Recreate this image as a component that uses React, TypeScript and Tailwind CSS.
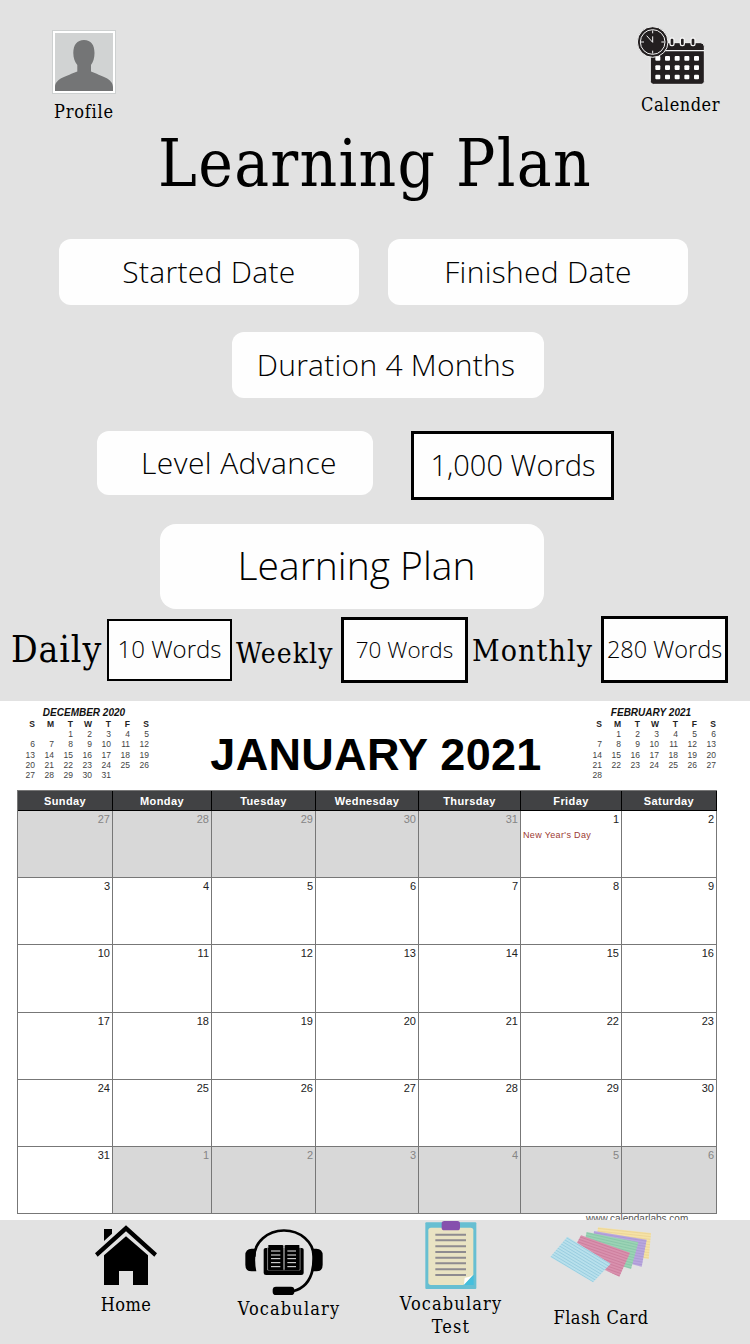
import type { ReactNode } from "react";

const slab = "font-['DejaVu_Serif_Condensed','DejaVu_Serif',serif] [font-stretch:condensed] whitespace-nowrap text-black";
const light = "font-['Open_Sans',sans-serif] font-light whitespace-nowrap text-black";

const weekdays = ["Sunday", "Monday", "Tuesday", "Wednesday", "Thursday", "Friday", "Saturday"];
const initials = ["S", "M", "T", "W", "T", "F", "S"];

function range(from: number, to: number) {
  return Array.from({ length: to - from + 1 }, (_, i) => from + i);
}

const days = [
  ...range(27, 31).map((n) => ({ n, muted: true })),
  ...range(1, 31).map((n) => ({ n, muted: false })),
  ...range(1, 6).map((n) => ({ n, muted: true })),
];

function Pill({ className, children }: { className: string; children: ReactNode }) {
  return (
    <div className={`flex items-center justify-center bg-[#fefefe] ${light} ${className}`}>{children}</div>
  );
}

function MiniMonth({ title, blanks, count }: { title: string; blanks: number; count: number }) {
  return (
    <div className="w-[133px] font-['Liberation_Sans',sans-serif] text-[8.5px] text-[#444]">
      <div className="h-[12px] pl-[3px] text-center text-[10px] leading-[12px] font-bold whitespace-nowrap text-[#111] italic">
        {title}
      </div>
      <div className="grid auto-rows-[10.2px] grid-cols-7 text-right leading-[10.2px]">
        {initials.map((d, i) => (
          <span key={i} className="font-bold text-[#222]">{d}</span>
        ))}
        {range(1, blanks).map((b) => (
          <span key={`b${b}`} />
        ))}
        {range(1, count).map((n) => (
          <span key={n}>{n}</span>
        ))}
      </div>
    </div>
  );
}

function ProfileIcon() {
  return (
    <svg width="64" height="64" viewBox="0 0 64 64">
      <rect x="0.5" y="0.5" width="63" height="63" fill="#fff" stroke="#cdd0d0" />
      <rect x="3" y="3" width="58" height="58" fill="#d1d3d3" />
      <path
        d="M32 10C25 10 21.3 15 21.3 23c0 5 1.500 9 4 12v6.500C15 46 3 48.500 3 57v4h58v-4C61 48.500 49 46 39 41.500V35c2.300-3 3.500-7 3.500-12C42.500 15 39 10 32 10z"
        fill="#747576"
      />
    </svg>
  );
}

function CalendarClockIcon() {
  return (
    <svg width="70" height="60" viewBox="0 0 210 180">
      <path d="M40 62q0-12 12-12h138q12 0 12 12v104q0 9-9 9H49q-9 0-9-9z" fill="#231f20" stroke="#f2f2f2" strokeWidth="3" />
      <path d="M40 74h162" stroke="#f4f4f4" strokeWidth="4" />
      {[105, 136, 168].map((x) => (
        <rect key={x} x={x - 6} y="36" width="12" height="23" rx="5" fill="#231f20" stroke="#f4f4f4" strokeWidth="4" />
      ))}
      {[97, 125, 153].map((y) =>
        [62, 91, 120, 149, 178].map((x) => (
          <rect key={`${x}-${y}`} x={x - 7} y={y - 7} width="15" height="14" rx="3" fill="#fff" />
        )),
      )}
      <circle cx="47" cy="48" r="46" fill="#231f20" stroke="#f2f2f2" strokeWidth="3" />
      <circle cx="47" cy="48" r="37" fill="none" stroke="#f4f4f4" strokeWidth="3" />
      <path d="M47 13v9M47 74v9M12 48h9M73 48h9M47 31v18L29 29" fill="none" stroke="#f4f4f4" strokeWidth="3" />
    </svg>
  );
}

function HomeIcon() {
  return (
    <svg width="62" height="60" viewBox="285 255 186 180">
      <path d="M312 267h24v14l-24 22zM378 289l66 57v89h-45v-42h-42v42h-45v-89z" fill="#000" />
      <path d="M285 340L378 256l93 84-8 10-85-76-85 76z" fill="#000" />
    </svg>
  );
}

function HeadsetBookIcon() {
  return (
    <svg width="78" height="66" viewBox="734 267 234 198">
      <path d="M762 350a89 78 0 0 1 178-1q2 88-62 105" fill="none" stroke="#000" strokeWidth="8" />
      <rect x="817" y="440" width="65" height="25" rx="10" />
      <path d="M768 326h-14q-19 0-19 20v28q0 20 19 20h14q-7-33 0-68zM934 326h14q19 0 19 20v28q0 20-19 20h-14q7-33 0-68z" />
      <path d="M790 329q0-5 6-5h108q6 0 6 5v70q0 6-7 6H797q-7 0-7-6z" />
      <path d="M802 321v69h97v-69" fill="none" stroke="#aaa" strokeWidth="2.500" />
      <path d="M804 315h42q4 0 4 5v71h-46zM897 315h-41q-4 0-4 5v71h45z" />
      <path d="M851 319v70" stroke="#ddd" strokeWidth="3" />
      <path
        d="M812 333h28M812 345h28M812 356h28M812 368h28M812 380h28M861 333h26M861 345h26M861 356h26M861 368h26M861 380h26"
        stroke="#eee"
        strokeWidth="3"
      />
    </svg>
  );
}

function ClipboardIcon() {
  return (
    <svg width="52" height="68" viewBox="152 242 156 204">
      <rect x="153" y="246" width="153" height="200" rx="3" fill="#67bfd2" />
      <path d="M170 262h119q8 0 8 8v133l-30 31h-97q-8 0-8-8V270q0-8 8-8z" fill="#e9e3c3" />
      <path d="M298 404v30h-30z" fill="#45bfdd" />
      <path d="M296 403l-27 30 2-21q14 0 25-9z" fill="#fff" />
      <rect x="202" y="242" width="55" height="28" rx="8" fill="#8650ad" />
      <path
        d="M183 283h92M183 300h92M183 318h92M183 335h92M183 352h92M183 369h92M183 387h92M183 404h92"
        stroke="#8e8b90"
        strokeWidth="6"
      />
    </svg>
  );
}

const cards = [
  { points: "668,261 827,278 820,356 660,330", fill: "#f5e2a6", line: "#e8cf91", tilt: 6 },
  { points: "656,272 814,298 799,379 650,340", fill: "#b9a7df", line: "#a795d0", tilt: 9 },
  { points: "634,275 789,306 767,386 620,340", fill: "#9bd3b5", line: "#82c3a5", tilt: 13 },
  { points: "617,285 764,337 732,409 606,350 606,306", fill: "#d991ae", line: "#c97998", tilt: 19 },
  { points: "576,289 706,370 653,426 525,350", fill: "#b8e0ec", line: "#8fc6da", tilt: 31 },
];

function FlashCardIcon() {
  return (
    <svg width="102" height="56" viewBox="524 260 306 168">
      {cards.map((c, i) => (
        <g key={i}>
          <clipPath id={`card${i}`}>
            <polygon points={c.points} />
          </clipPath>
          <polygon points={c.points} fill={c.fill} />
          <g clipPath={`url(#card${i})`}>
            <g transform={`rotate(${c.tilt} 680 340)`}>
              {range(0, 34).map((k) => (
                <path key={k} d={`M440 ${210 + k * 8}h480`} stroke={c.line} strokeWidth="2" />
              ))}
            </g>
          </g>
        </g>
      ))}
    </svg>
  );
}

export default function App() {
  return (
    <main className="flex h-[1344px] w-[750px] flex-col overflow-hidden bg-[#e2e2e2]">
      <header className="flex h-[131px] justify-between pr-[29px] pl-[44px]">
        <div className="flex w-[80px] flex-col items-center pt-[30px]">
          <ProfileIcon />
          <span className={`${slab} mt-[8px] text-[18px] leading-[20px] tracking-[0.8px]`}>Profile</span>
        </div>
        <div className="flex w-[84px] flex-col items-start pt-[26px]">
          <CalendarClockIcon />
          <span className={`${slab} mt-[9px] ml-[4px] text-[18px] leading-[20px] tracking-[0.5px]`}>Calender</span>
        </div>
      </header>

      <h1 className={`${slab} text-center text-[65px] leading-[66px] tracking-[1.3px]`}>Learning Plan</h1>

      <section className="mt-[42px] flex gap-[29px] pl-[59px]">
        <Pill className="h-[66px] w-[300px] rounded-xl pb-[2px] text-[30px] tracking-[0.3px]">Started Date</Pill>
        <Pill className="h-[66px] w-[300px] rounded-xl pb-[2px] text-[30px] tracking-[0.3px]">Finished Date</Pill>
      </section>
      <section className="mt-[27px] pl-[232px]">
        <Pill className="h-[66px] w-[312px] rounded-xl pr-[4px] pb-[2px] text-[30px] tracking-[0.25px]">
          Duration 4 Months
        </Pill>
      </section>
      <section className="mt-[33px] flex items-start gap-[38px] pl-[97px]">
        <Pill className="h-[64px] w-[276px] rounded-xl pb-[2px] pl-[8px] text-[30px] tracking-[0.4px]">
          Level Advance
        </Pill>
        <Pill className="h-[69px] w-[203px] border-3 border-black pb-[1px] pl-[1px] text-[29px]">1,000 Words</Pill>
      </section>
      <section className="mt-[24px] pl-[160px]">
        <Pill className="h-[85px] w-[384px] rounded-2xl pb-[2px] pl-[9px] text-[39px]">Learning Plan</Pill>
      </section>

      <section className="mt-[7px] flex h-[67px] items-center pl-[11px]">
        <span className={`${slab} w-[96px] text-[37px] tracking-[0.9px]`}>Daily</span>
        <Pill className="h-[62px] w-[125px] border-[2.5px] border-black pb-[1px] text-[24px]">10 Words</Pill>
        <span className={`${slab} w-[109px] pt-[9px] pl-[4px] text-[28px] tracking-[1.1px]`}>Weekly</span>
        <Pill className="h-[66px] w-[127px] border-3 border-black text-[22.5px]">70 Words</Pill>
        <span className={`${slab} w-[133px] pt-[2px] pl-[4px] text-[30px] tracking-[1.1px]`}>Monthly</span>
        <Pill className="h-[67px] w-[127px] border-3 border-black text-[23.5px]">280 Words</Pill>
      </section>

      <section className="mt-[18px] flex h-[519px] shrink-0 flex-col overflow-hidden bg-white">
        <div className="flex h-[89px] shrink-0 items-start justify-between pt-[6px] pr-[34px] pl-[16px]">
          <MiniMonth title="DECEMBER 2020" blanks={2} count={31} />
          <h2 className="pt-[22px] pl-[20px] font-['Liberation_Sans',sans-serif] text-[45px] leading-[52px] font-bold tracking-[0.3px] whitespace-nowrap text-black">
            JANUARY 2021
          </h2>
          <MiniMonth title="FEBRUARY 2021" blanks={1} count={28} />
        </div>
        <div className="ml-[17px] grid w-[700px] shrink-0 grid-cols-[95px_99px_104px_103px_102px_101px_95px] grid-rows-[20px_repeat(6,67.2px)] border-t border-l border-[#777] font-['Liberation_Sans',sans-serif]">
          {weekdays.map((d) => (
            <div
              key={d}
              className="border-r border-b border-black bg-[#414244] text-center text-[11px] leading-[20px] font-bold tracking-[0.4px] text-white"
            >
              {d}
            </div>
          ))}
          {days.map((d, i) => (
            <div
              key={i}
              className={`border-r border-b border-[#777] pt-[2px] pr-[2px] text-right text-[11px] leading-[12px] ${
                d.muted ? "bg-[#d8d8d8] text-[#858585]" : "bg-white text-[#222]"
              }`}
            >
              {d.n}
              {i === 5 && (
                <div className="mt-[5px] pl-[2px] text-left text-[9px] leading-[10px] tracking-[0.35px] text-[#9c3a32]">
                  New Year's Day
                </div>
              )}
            </div>
          ))}
        </div>
        <div className="h-[6px] pl-[586px] font-['Liberation_Sans',sans-serif] text-[10px] leading-[10px] text-[#555]">
          www.calendarlabs.com
        </div>
      </section>

      <footer className="flex h-[124px] items-start">
        <div className="ml-[86px] flex w-[80px] flex-col items-center pt-[5px]">
          <HomeIcon />
          <span className={`${slab} mt-[10px] text-[18px] leading-[20px] tracking-[0.4px]`}>Home</span>
        </div>
        <div className="ml-[64px] flex w-[118px] flex-col items-center pt-[9px]">
          <span className="block h-[66px] pr-[10px]">
            <HeadsetBookIcon />
          </span>
          <span className={`${slab} mt-[4px] text-[18px] leading-[20px] tracking-[1.15px]`}>Vocabulary</span>
        </div>
        <div className="ml-[44px] flex w-[118px] flex-col items-center pt-[1px]">
          <ClipboardIcon />
          <span className={`${slab} mt-[3px] text-center text-[18px] leading-[23px] tracking-[1.15px]`}>
            Vocabulary
            <br />
            Test
          </span>
        </div>
        <div className="ml-[32px] flex w-[118px] flex-col items-center pt-[7px]">
          <FlashCardIcon />
          <span className={`${slab} mt-[25px] text-[18px] leading-[20px] tracking-[0.5px]`}>Flash Card</span>
        </div>
      </footer>
    </main>
  );
}
